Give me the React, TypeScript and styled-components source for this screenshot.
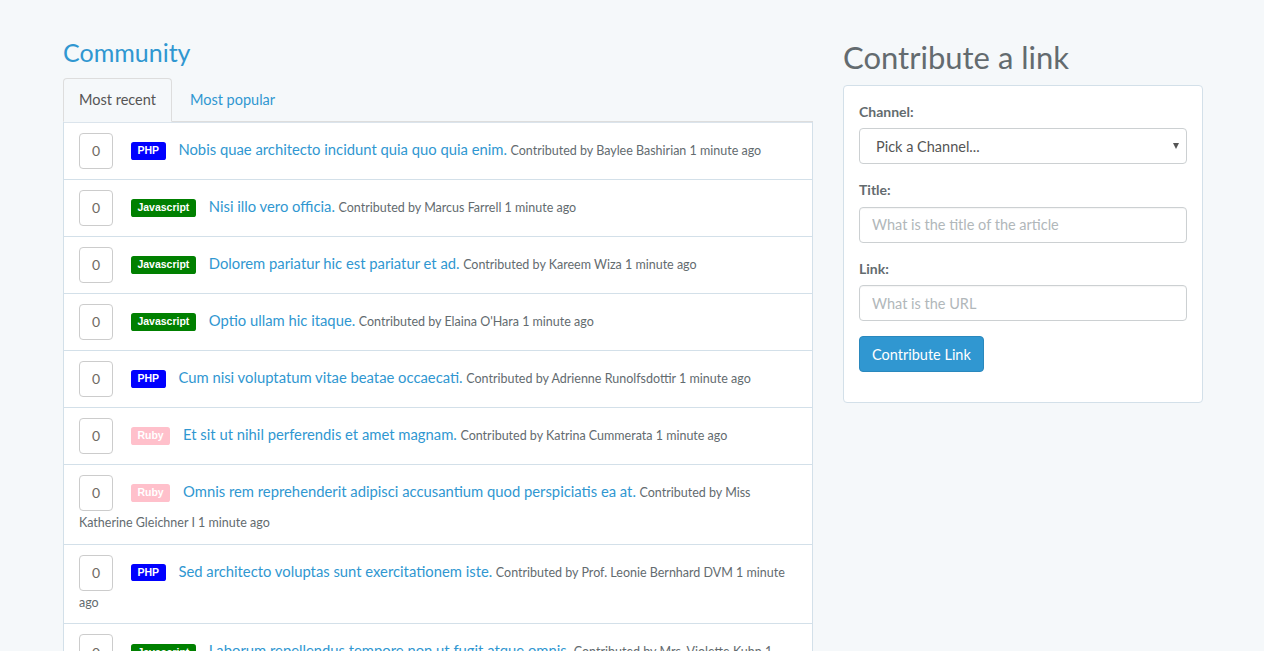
import React from "react";
import styled, { createGlobalStyle } from "styled-components";

const GlobalStyle = createGlobalStyle`
  html, body {
    margin: 0;
    padding: 0;
    background-color: #f5f8fa;
  }
  body {
    font-family: "Lato", "Open Sans", sans-serif;
    font-size: 14px;
    line-height: 1.6;
    color: #636b6f;
  }
  * {
    box-sizing: border-box;
  }
`;

// Bootstrap-like container
const Container = styled.div`
  width: 1170px;
  margin: 0 auto;
  padding: 20px 14px 0 16px;
  display: grid;
  grid-template-columns: 750px 360px;
  column-gap: 30px;
  align-items: start;
`;

const Column = styled.section`
  min-width: 0;
`;

const SectionTitle = styled.h3`
  margin: 19px 0 11px 0;
  font-size: 25px;
  font-weight: 400;
  line-height: 1.1;
  color: #3097d1;
`;

const PageTitle = styled.h1`
  margin: 20px 0 11px 0;
  font-size: 31px;
  font-weight: 400;
  line-height: 1.1;
  color: #636b6f;
`;

// Tabs
const Tabs = styled.ul`
  list-style: none;
  margin: 0;
  padding: 0;
  display: flex;
  border-bottom: 1px solid #ddd;
`;

const Tab = styled.li<{ $active?: boolean }>`
  margin: 0 2px -1px 0;
  padding: 10px 15px;
  line-height: 22.4px;
  border: 1px solid ${(p) => (p.$active ? "#ddd" : "transparent")};
  border-bottom-color: ${(p) => (p.$active ? "#f5f8fa" : "transparent")};
  border-radius: 4px 4px 0 0;
  background: ${(p) => (p.$active ? "#f5f8fa" : "transparent")};
  color: ${(p) => (p.$active ? "#555" : "#3097d1")};
  font-size: 14.5px;
  cursor: pointer;
`;

// List of links
const LinkList = styled.ul`
  list-style: none;
  margin: 0;
  padding: 0;
  background: #fff;
  border: 1px solid #d3e0e9;
  border-top: none;
`;

const LinkItem = styled.li`
  padding: 10px 15px;
  border-top: 1px solid #d3e0e9;
  line-height: 21.6px;

  &:first-child {
    border-top: 1px solid #dbe4ec;
  }
`;

const VoteButton = styled.button`
  display: inline-block;
  vertical-align: middle;
  width: 34px;
  height: 36px;
  margin: 0 14px 0 0;
  padding: 0;
  border: 1px solid #ccc;
  border-radius: 4px;
  background: #fff;
  color: #6f6a63;
  font-family: inherit;
  font-size: 14px;
  cursor: pointer;
`;

const ChannelLabel = styled.span<{ $color: string }>`
  display: inline;
  margin-right: 9px;
  padding: 0.2em 0.65em 0.3em;
  border-radius: 0.25em;
  background: ${(p) => p.$color};
  color: #fff;
  font-family: "Liberation Sans", Arial, sans-serif;
  font-size: 10.5px;
  font-weight: 700;
  line-height: 1;
  vertical-align: baseline;
  white-space: nowrap;
`;

const TitleLink = styled.a`
  color: #3097d1;
  font-size: 14.8px;
  text-decoration: none;
`;

const Meta = styled.small`
  font-size: 12.5px;
  color: #636b6f;
`;

// Right panel
const Panel = styled.div`
  background: #fff;
  border: 1px solid #d3e0e9;
  border-radius: 4px;
  padding: 15px 15px 14px;
`;

const FormGroup = styled.div`
  margin-bottom: 15px;
`;

const FieldLabel = styled.label`
  display: block;
  margin-bottom: 5px;
  font-weight: 700;
  color: #636b6f;
`;

const SelectWrap = styled.div`
  position: relative;

  &::after {
    content: "";
    position: absolute;
    right: 8px;
    top: 15px;
    border-left: 3.5px solid transparent;
    border-right: 3.5px solid transparent;
    border-top: 6px solid #555;
    pointer-events: none;
  }
`;

const Select = styled.select`
  display: block;
  width: 100%;
  height: 36px;
  padding: 6px 12px 6px 16px;
  border: 1px solid #ccd0d2;
  border-radius: 4px;
  background: #fff;
  color: #555;
  font-family: inherit;
  font-size: 14.5px;
  appearance: none;
  -webkit-appearance: none;
`;

const Input = styled.input`
  display: block;
  width: 100%;
  height: 36px;
  padding: 6px 12px;
  border: 1px solid #ccd0d2;
  border-radius: 4px;
  background: #fff;
  color: #555;
  font-family: inherit;
  font-size: 14.5px;
  box-shadow: inset 0 1px 1px rgba(0, 0, 0, 0.04);

  &::placeholder {
    color: #b1b7ba;
  }
`;

const PrimaryButton = styled.button`
  display: inline-block;
  height: 36px;
  margin: 0 0 16px;
  padding: 6px 12px;
  border: 1px solid #2a88bd;
  border-radius: 4px;
  background: #3097d1;
  color: #fff;
  font-family: inherit;
  font-size: 14.5px;
  cursor: pointer;
`;

type Channel = "PHP" | "Javascript" | "Ruby";

const channelColors: Record<Channel, string> = {
  PHP: "#0000ff",
  Javascript: "#008000",
  Ruby: "#ffc0cb",
};

const links: { channel: Channel; title: string; author: string }[] = [
  { channel: "PHP", title: "Nobis quae architecto incidunt quia quo quia enim.", author: "Baylee Bashirian" },
  { channel: "Javascript", title: "Nisi illo vero officia.", author: "Marcus Farrell" },
  { channel: "Javascript", title: "Dolorem pariatur hic est pariatur et ad.", author: "Kareem Wiza" },
  { channel: "Javascript", title: "Optio ullam hic itaque.", author: "Elaina O'Hara" },
  { channel: "PHP", title: "Cum nisi voluptatum vitae beatae occaecati.", author: "Adrienne Runolfsdottir" },
  { channel: "Ruby", title: "Et sit ut nihil perferendis et amet magnam.", author: "Katrina Cummerata" },
  { channel: "Ruby", title: "Omnis rem reprehenderit adipisci accusantium quod perspiciatis ea at.", author: "Miss Katherine Gleichner I" },
  { channel: "PHP", title: "Sed architecto voluptas sunt exercitationem iste.", author: "Prof. Leonie Bernhard DVM" },
  { channel: "Javascript", title: "Laborum repellendus tempore non ut fugit atque omnis.", author: "Mrs. Violette Kuhn" },
  { channel: "PHP", title: "Quia dolores minima ut voluptatem.", author: "Dr. Ansel Hahn" },
];

export default function App() {
  return (
    <>
      <GlobalStyle />
      <Container>
        <Column>
          <SectionTitle>Community</SectionTitle>
          <Tabs>
            <Tab $active>Most recent</Tab>
            <Tab>Most popular</Tab>
          </Tabs>
          <LinkList>
            {links.map((l, i) => (
              <LinkItem key={i}>
                <VoteButton>0</VoteButton>{" "}
                <ChannelLabel $color={channelColors[l.channel]}>{l.channel}</ChannelLabel>{" "}
                <TitleLink href="#">{l.title}</TitleLink>{" "}
                <Meta>Contributed by {l.author} 1 minute ago</Meta>
              </LinkItem>
            ))}
          </LinkList>
        </Column>
        <Column>
          <PageTitle>Contribute a link</PageTitle>
          <Panel>
            <FormGroup>
              <FieldLabel htmlFor="channel">Channel:</FieldLabel>
              <SelectWrap>
                <Select id="channel" defaultValue="">
                  <option value="" disabled>
                    Pick a Channel...
                  </option>
                  <option value="php">PHP</option>
                  <option value="js">Javascript</option>
                  <option value="ruby">Ruby</option>
                </Select>
              </SelectWrap>
            </FormGroup>
            <FormGroup>
              <FieldLabel htmlFor="title">Title:</FieldLabel>
              <Input id="title" type="text" placeholder="What is the title of the article" />
            </FormGroup>
            <FormGroup>
              <FieldLabel htmlFor="link">Link:</FieldLabel>
              <Input id="link" type="text" placeholder="What is the URL" />
            </FormGroup>
            <PrimaryButton>Contribute Link</PrimaryButton>
          </Panel>
        </Column>
      </Container>
    </>
  );
}
